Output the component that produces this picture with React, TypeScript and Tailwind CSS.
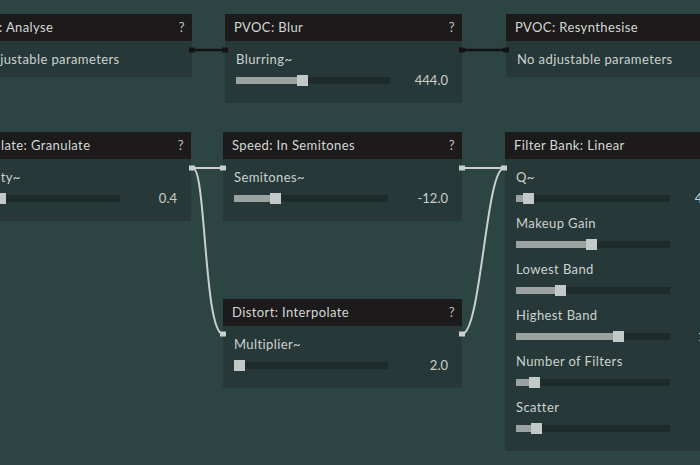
import type { ReactNode } from 'react'

type Param = { label: string; thumb: number; value?: string }

type NodeProps = {
  x: number
  y: number
  w?: number
  title: string
  help?: boolean
  params?: Param[]
  children?: ReactNode
}

function Slider({ thumb, value }: { thumb: number; value?: string }) {
  return (
    <div className="flex h-[14px] items-center">
      <div className="relative h-[7px] w-[154px] shrink-0 bg-[#1d2b2a]">
        <div className="absolute inset-y-0 left-0 bg-[#9ba3a1]" style={{ width: thumb + 5 }} />
        <div
          className="absolute top-[-2px] h-[11px] w-[11px] bg-[#c3c9c7]"
          style={{ left: thumb }}
        />
      </div>
      <div className="flex-1 pr-[14px] text-right text-[13px] leading-[14px] tracking-normal text-[#c9cfcd]">
        {value}
      </div>
    </div>
  )
}

function Node({ x, y, w = 237, title, help = true, params, children }: NodeProps) {
  return (
    <div className="absolute flex flex-col" style={{ left: x, top: y, width: w }}>
      <div className="flex h-[27px] items-center justify-between bg-[#1c1a1a] pl-[9px] pr-[7px] text-[13px] text-[#d3d8d6]">
        <span className="whitespace-nowrap">{title}</span>
        {help && <span className="text-[#bfc5c3]">?</span>}
      </div>
      <div className="bg-[#263837] pl-[11px]">
        {params ? (
          <div className="flex flex-col gap-[9px] pb-[16px] pt-[9px]">
            {params.map((p) => (
              <div key={p.label} className="flex flex-col gap-[5px]">
                <div className="h-[18px] whitespace-nowrap text-[13px] leading-[18px] text-[#ccd2d0]">{p.label}</div>
                <Slider thumb={p.thumb} value={p.value} />
              </div>
            ))}
          </div>
        ) : (
          <div className="whitespace-nowrap py-[9px] text-[13px] leading-[18px] text-[#ccd2d0]">{children}</div>
        )}
      </div>
    </div>
  )
}

function Port({ x, y, dark }: { x: number; y: number; dark?: boolean }) {
  return <rect x={x - 3} y={y - 2.5} width={6} height={5} fill={dark ? '#121413' : '#c9d0ce'} />
}

function Wires() {
  const light = '#c9d0ce'
  return (
    <svg className="pointer-events-none absolute inset-0" width={700} height={465}>
      <line x1={192} y1={50} x2={225} y2={50} stroke="#121413" strokeWidth={2.5} />
      <line x1={462} y1={50} x2={506} y2={50} stroke="#121413" strokeWidth={2.5} />
      <Port x={192} y={50} dark />
      <Port x={225} y={50} dark />
      <Port x={462} y={50} dark />
      <Port x={506} y={50} dark />

      <line x1={192} y1={168} x2={223} y2={168} stroke={light} strokeWidth={2} />
      <line x1={462} y1={168} x2={504} y2={168} stroke={light} strokeWidth={2} />
      <path d="M193,168 C206,168 204,334 223,334" fill="none" stroke={light} strokeWidth={2} />
      <path d="M462,334 C481,334 486,168 504,168" fill="none" stroke={light} strokeWidth={2} />
      <Port x={192} y={168} />
      <Port x={223} y={168} />
      <Port x={462} y={168} />
      <Port x={504} y={168} />
      <Port x={223} y={334} />
      <Port x={462} y={334} />
    </svg>
  )
}

export default function App() {
  return (
    <div
      className="relative h-[465px] w-[700px] overflow-hidden bg-[#2c4543] tracking-[0.4px]"
      style={{ fontFamily: 'Lato, "Open Sans", sans-serif' }}
    >
      <Node x={-47} y={14} w={239} title="PVOC: Analyse">
        No adjustable parameters
      </Node>
      <Node
        x={225}
        y={14}
        title="PVOC: Blur"
        params={[{ label: 'Blurring~', thumb: 61, value: '444.0' }]}
      />
      <Node x={506} y={14} title="PVOC: Resynthesise" help={false}>
        No adjustable parameters
      </Node>

      <Node
        x={-45}
        y={132}
        w={236}
        title="Granulate: Granulate"
        params={[{ label: 'Density~', thumb: 29, value: '0.4' }]}
      />
      <Node
        x={223}
        y={132}
        w={239}
        title="Speed: In Semitones"
        params={[{ label: 'Semitones~', thumb: 36, value: '-12.0' }]}
      />
      <Node
        x={505}
        y={132}
        title="Filter Bank: Linear"
        help={false}
        params={[
          { label: 'Q~', thumb: 7, value: '400.0' },
          { label: 'Makeup Gain', thumb: 70, value: '0.0' },
          { label: 'Lowest Band', thumb: 39, value: '20' },
          { label: 'Highest Band', thumb: 97, value: '1000' },
          { label: 'Number of Filters', thumb: 13, value: '8' },
          { label: 'Scatter', thumb: 15, value: '0.0' },
        ]}
      />

      <Node
        x={223}
        y={299}
        w={239}
        title="Distort: Interpolate"
        params={[{ label: 'Multiplier~', thumb: 0, value: '2.0' }]}
      />

      <Wires />
    </div>
  )
}
